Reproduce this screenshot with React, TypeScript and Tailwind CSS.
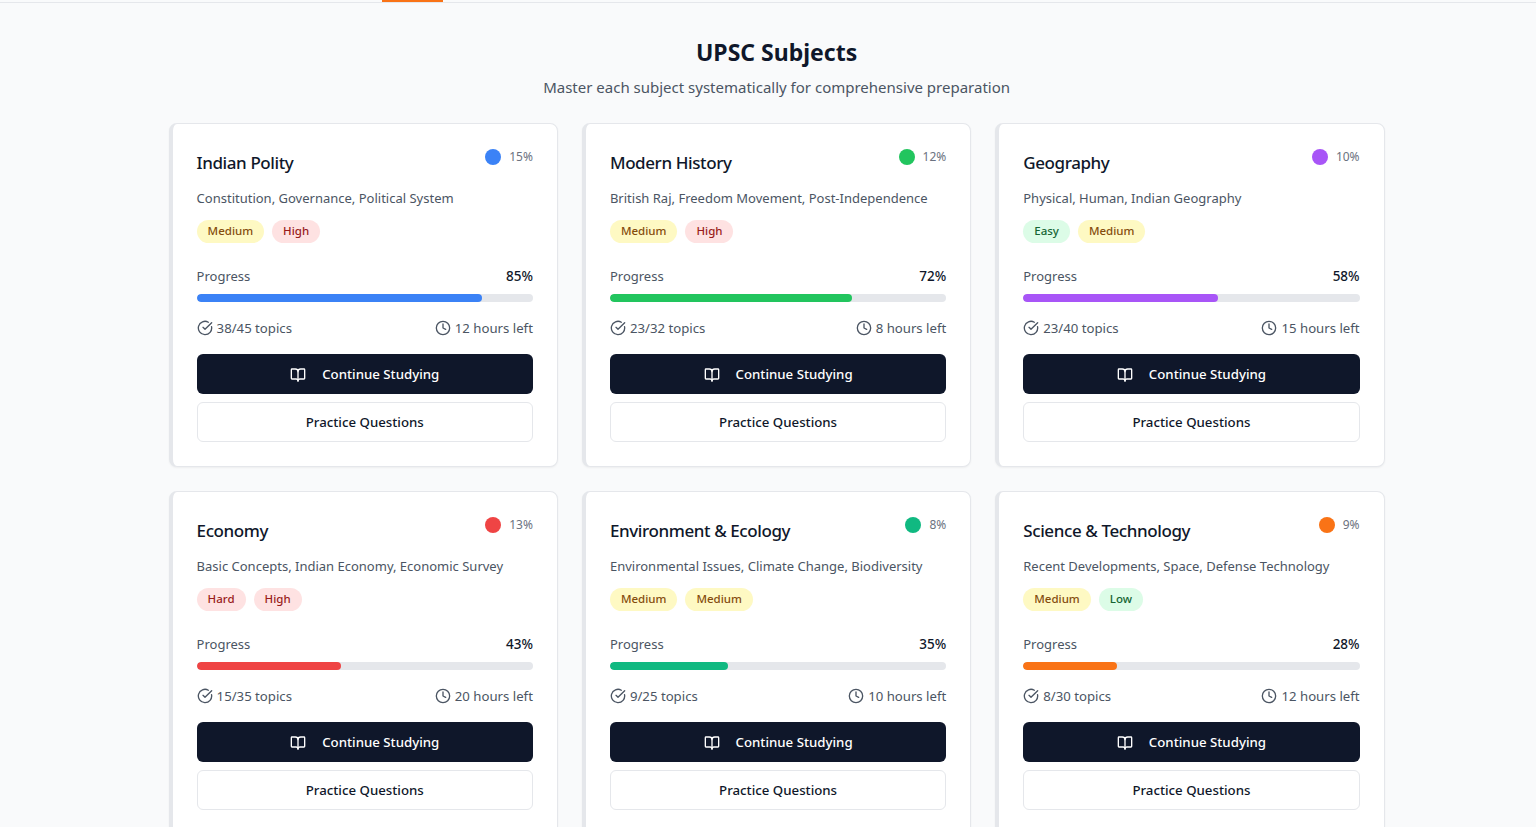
import { BookOpen, CircleCheckBig, Clock } from "lucide-react";

type Tone = "Easy" | "Medium" | "Hard" | "High" | "Low";
const toneClass: Record<Tone, string> = {
  Easy: "bg-[#dcfce7] text-[#166534]",
  Low: "bg-[#dcfce7] text-[#166534]",
  Medium: "bg-[#fef9c3] text-[#854d0e]",
  Hard: "bg-[#fee2e2] text-[#991b1b]",
  High: "bg-[#fee2e2] text-[#991b1b]",
};

const subjects: {
  name: string; desc: string; dot: string; bar: string; weight: string; tags: Tone[];
  progress: number; topics: string; hours: string;
}[] = [
  { name: "Indian Polity", desc: "Constitution, Governance, Political System", dot: "bg-[#3b82f6]", bar: "bg-[#3b82f6]", weight: "15%", tags: ["Medium", "High"], progress: 85, topics: "38/45 topics", hours: "12 hours left" },
  { name: "Modern History", desc: "British Raj, Freedom Movement, Post-Independence", dot: "bg-[#22c55e]", bar: "bg-[#22c55e]", weight: "12%", tags: ["Medium", "High"], progress: 72, topics: "23/32 topics", hours: "8 hours left" },
  { name: "Geography", desc: "Physical, Human, Indian Geography", dot: "bg-[#a855f7]", bar: "bg-[#a855f7]", weight: "10%", tags: ["Easy", "Medium"], progress: 58, topics: "23/40 topics", hours: "15 hours left" },
  { name: "Economy", desc: "Basic Concepts, Indian Economy, Economic Survey", dot: "bg-[#ef4444]", bar: "bg-[#ef4444]", weight: "13%", tags: ["Hard", "High"], progress: 43, topics: "15/35 topics", hours: "20 hours left" },
  { name: "Environment & Ecology", desc: "Environmental Issues, Climate Change, Biodiversity", dot: "bg-[#10b981]", bar: "bg-[#10b981]", weight: "8%", tags: ["Medium", "Medium"], progress: 35, topics: "9/25 topics", hours: "10 hours left" },
  { name: "Science & Technology", desc: "Recent Developments, Space, Defense Technology", dot: "bg-[#f97316]", bar: "bg-[#f97316]", weight: "9%", tags: ["Medium", "Low"], progress: 28, topics: "8/30 topics", hours: "12 hours left" },
];

function Card({ s }: { s: (typeof subjects)[number] }) {
  return (
    <div className="h-[344px] rounded-lg border border-[#e5e7eb] border-l-4 bg-white px-6 pt-6 shadow-[0_1px_2px_rgba(0,0,0,0.05)]">
      <div className="flex items-start justify-between">
        <h3 className="mt-px text-[17px] font-medium leading-7 tracking-[-0.4px] text-[#0f172a]">{s.name}</h3>
        <div className="mt-px flex items-center gap-2">
          <span className={`h-4 w-4 rounded-full ${s.dot}`} />
          <span className="text-xs leading-4 text-[#6b7280]">{s.weight}</span>
        </div>
      </div>
      <p className="mt-[11px] text-[13px] leading-5 text-[#4b5563]">{s.desc}</p>
      <div className="mt-3 flex gap-2">
        {s.tags.map((t, i) => (
          <span key={i} className={`h-[23px] rounded-full px-[11px] py-[3px] text-[11.5px] font-medium leading-[16px] ${toneClass[t]}`}>{t}</span>
        ))}
      </div>
      <div className="mt-[23px] flex justify-between text-[13px] leading-5">
        <span className="text-[#4b5563]">Progress</span>
        <span className="text-[13.5px] font-medium text-[#0f172a]">{s.progress}%</span>
      </div>
      <div className="mt-2 h-2 overflow-hidden rounded-full bg-[#e5e7eb]">
        <div className={`h-full rounded-full ${s.bar}`} style={{ width: `${s.progress}%` }} />
      </div>
      <div className="mt-4 flex justify-between text-[13.2px] leading-5 text-[#4b5563]">
        <span className="flex items-center gap-1"><CircleCheckBig className="h-4 w-4" />{s.topics}</span>
        <span className="flex items-center gap-1"><Clock className="h-4 w-4" />{s.hours}</span>
      </div>
      <button className="mt-4 flex h-10 w-full items-center justify-center gap-4 rounded-md bg-[#0f172a] pt-px text-[13.25px] font-medium text-white">
        <BookOpen className="h-4 w-4" />Continue Studying
      </button>
      <button className="mt-2 flex h-10 w-full items-center justify-center rounded-md border border-[#e5e7eb] bg-white pt-px text-[13.25px] font-medium text-[#0f172a]">
        Practice Questions
      </button>
    </div>
  );
}

export default function App() {
  return (
    <div className="h-screen overflow-hidden bg-[#f9fafb] font-['Noto_Sans',sans-serif]">
      <div className="h-[3px] border-b border-[#e5e7eb]">
        <div className="ml-[382px] h-[2px] w-[61px] bg-[#f97316]" />
      </div>
      <div className="ml-[168.6px] w-[1216px] pt-[33px]">
        <div className="text-center">
          <h2 className="text-[23px] font-bold leading-8 text-[#0f172a]">UPSC Subjects</h2>
          <p className="mt-[7px] text-[15px] leading-6 text-[#4b5563]">Master each subject systematically for comprehensive preparation</p>
        </div>
        <div className="mt-6 grid grid-cols-3 gap-6">
          {subjects.map((s) => <Card key={s.name} s={s} />)}
        </div>
      </div>
    </div>
  );
}
